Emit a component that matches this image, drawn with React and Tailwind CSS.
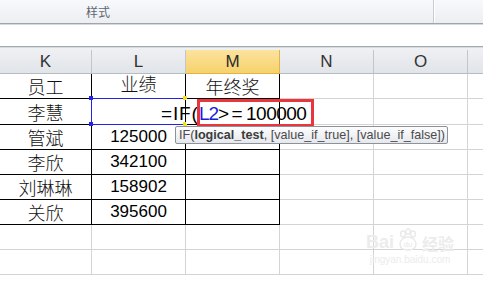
import React from "react";

const W = ["w-[92px]", "w-[94px]", "w-[94px]", "w-[94px]", "w-[94px]"];

function Cell({ w, black, blackR, children, className = "" }) {
  const br = blackR ?? black;
  return (
    <div
      className={`${w} shrink-0 h-full border-r border-b flex items-end justify-center pb-[1px] ${
        black ? "border-b-black" : "border-b-[#d4d4d4]"
      } ${br ? "border-r-black" : "border-r-[#d4d4d4]"} ${className}`}
    >
      {children}
    </div>
  );
}

const cjk = "font-['Noto_Sans_CJK_SC',sans-serif] font-light text-[18px] leading-[22px] text-[#111]";
const num = "font-['Liberation_Sans',Arial,sans-serif] text-[17px] leading-[22px] text-black";

function DataRow({ h, name, val, m, mBlack = true }) {
  return (
    <div className={`flex ${h}`}>
      <Cell w={W[0]} black>
        <span className={cjk}>{name}</span>
      </Cell>
      <Cell w={W[1]} black>
        <span className={num}>{val}</span>
      </Cell>
      <Cell w={W[2]} black={mBlack}>
        {m ? <span className={cjk}>{m}</span> : null}
      </Cell>
      <Cell w={W[3]} />
      <Cell w={W[4]} />
      <div className="flex-1 h-full border-b border-b-[#d4d4d4]" />
    </div>
  );
}

function EmptyRow() {
  return (
    <div className="flex h-[25px]">
      <Cell w={W[0]} />
      <Cell w={W[1]} />
      <Cell w={W[2]} />
      <Cell w={W[3]} />
      <Cell w={W[4]} />
      <div className="flex-1 h-full border-b border-b-[#d4d4d4]" />
    </div>
  );
}

function Head({ w, label, sel }) {
  return (
    <div
      className={`${w} shrink-0 h-full border-r border-b flex items-center justify-center font-['Liberation_Sans',Arial,sans-serif] text-[17px] ${
        sel
          ? "bg-gradient-to-b from-[#fbe39e] to-[#f7d26a] border-r-[#e2b14a] border-b-[#e2b14a] text-[#2b2b2b]"
          : "bg-gradient-to-b from-[#eef0f3] to-[#e1e4e8] border-r-[#c2c6cc] border-b-[#b7bcc2] text-[#333]"
      }`}
    >
      {label}
    </div>
  );
}

export default function App() {
  return (
    <div className="relative w-[483px] h-[282px] overflow-hidden bg-white select-none">
      {/* ribbon */}
      <div className="relative h-[23px] bg-gradient-to-b from-[#f8f9fb] to-[#eceef2]">
        <span className="absolute left-[86px] top-[4px] font-['Noto_Sans_CJK_SC',sans-serif] text-[12px] leading-[16px] text-[#5f6672]">
          样式
        </span>
        <div className="absolute left-[433px] top-0 h-full w-[1px] bg-[#c9cdd3]" />
        <div className="absolute left-[434px] top-0 h-full w-[1px] bg-white" />
      </div>
      <div className="h-[1px] bg-[#9fa5ac]" />
      <div className="h-[1px] bg-[#d6d9dd]" />
      <div className="h-[21px] bg-white" />
      <div className="h-[1px] bg-[#a3a8ae]" />
      <div className="h-[1px] bg-[#d9dcdf]" />
      <div className="h-[2px] bg-[#eef0f2]" />

      {/* column headers */}
      <div className="flex h-[24px]">
        <Head w={W[0]} label="K" />
        <Head w={W[1]} label="L" />
        <Head w={W[2]} label="M" sel />
        <Head w={W[3]} label="N" />
        <Head w={W[4]} label="O" />
        <div className="flex-1 h-full border-b border-b-[#b7bcc2] bg-gradient-to-b from-[#eef0f3] to-[#e1e4e8]" />
      </div>

      {/* rows */}
      <DataRow h="h-[25px]" name="员工" val={<span className={cjk}>业绩</span>} m="年终奖" />
      <DataRow h="h-[26px]" name="李慧" val="" />
      <DataRow h="h-[25px]" name="管斌" val="125000" />
      <DataRow h="h-[25px]" name="李欣" val="342100" />
      <DataRow h="h-[25px]" name="刘琳琳" val="158902" />
      <DataRow h="h-[25px]" name="关欣" val="395600" />
      <EmptyRow />
      <EmptyRow />

      {/* active cell selection */}
      <div className="absolute left-[91px] top-[98px] w-[94px] h-[27px] border-t border-l border-b border-[#2323e6] bg-white" />
      <div className="absolute left-[89px] top-[96px] w-[4px] h-[4px] bg-[#2323e6]" />
      <div className="absolute left-[89px] top-[122px] w-[4px] h-[4px] bg-[#2323e6]" />
      <div className="absolute left-[183px] top-[96px] w-[4px] h-[4px] bg-[#f2e21a]" />
      <div className="absolute left-[183px] top-[122px] w-[4px] h-[4px] bg-[#f2e21a]" />

      {/* M2 background under formula overflow */}
      <div className="absolute left-[186px] top-[99px] w-[93px] h-[25px] bg-white" />

      {/* formula text */}
      <div className="absolute left-[161px] top-[101px] flex items-center h-[24px] font-['Liberation_Sans',Arial,sans-serif] text-[19px] text-black leading-none">
        <span className="w-[38px] tracking-[0.8px]">=IF(</span>
        <span className="w-[18px] text-[#1a1ae0] tracking-[-1px]">L2</span>
        <span className="w-[29px] tracking-[2.5px] pl-[1px]">&gt;=</span>
        <span className="tracking-[-0.5px]">100000</span>
      </div>

      {/* red highlight box */}
      <div className="absolute left-[197px] top-[99px] w-[117px] h-[28px] border-[3px] border-[#e8363c]" />

      {/* tooltip */}
      <div className="absolute left-[175px] top-[126px] w-[273px] h-[18px] border border-[#8f9399] rounded-[2px] bg-gradient-to-b from-[#fdfdfe] to-[#e5e8ed] flex items-center pl-[3px] font-['Liberation_Sans',Arial,sans-serif] text-[12.6px] text-[#4b4b4b] whitespace-nowrap leading-none">
        <span>IF(</span>
        <span className="font-bold text-[#3c3c3c]">logical_test</span>
        <span>, [value_if_true], [value_if_false])</span>
      </div>

      {/* watermark */}
      <div className="absolute left-[366px] top-[228px] flex flex-col items-center text-[#ececec] pointer-events-none">
        <div className="flex items-end gap-[2px] leading-none">
          <span className="font-['Liberation_Sans',Arial,sans-serif] text-[18px] font-bold">Bai</span>
          <svg width="24" height="24" viewBox="0 0 24 24" className="mb-[-1px]">
            <g fill="none" stroke="#e9e9e9" strokeWidth="1.4">
              <ellipse cx="7" cy="6" rx="2.4" ry="3" />
              <ellipse cx="12" cy="3.6" rx="2.2" ry="2.8" />
              <ellipse cx="17" cy="6" rx="2.4" ry="3" />
              <path d="M4 16c0-4 4-7 8-7s8 3 8 7-3 6-8 6-8-2-8-6z" />
            </g>
            <text x="12" y="19" textAnchor="middle" fontSize="8" fill="#e9e9e9" fontFamily="Liberation Sans">du</text>
          </svg>
          <span className="font-['Noto_Sans_CJK_SC',sans-serif] text-[16px] font-bold">经验</span>
        </div>
        <span className="font-['Liberation_Sans',Arial,sans-serif] text-[10px] mt-[4px] leading-none">
          jingyan.baidu.com
        </span>
      </div>
    </div>
  );
}
